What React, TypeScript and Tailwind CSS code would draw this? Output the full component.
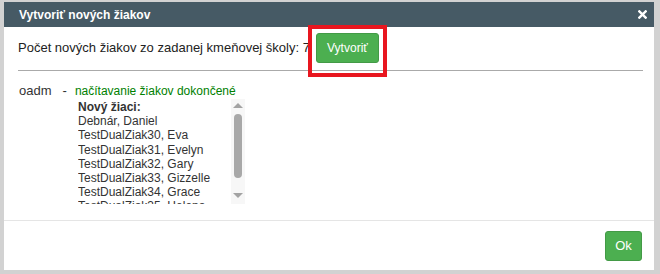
const students = [
  'Debnár, Daniel',
  'TestDualZiak30, Eva',
  'TestDualZiak31, Evelyn',
  'TestDualZiak32, Gary',
  'TestDualZiak33, Gizzelle',
  'TestDualZiak34, Grace',
  'TestDualZiak35, Helena',
];

function FakeScrollbar() {
  return (
    <div className="flex w-[14px] flex-col items-center bg-[#f7f7f7]">
      {/* up arrow */}
      <div className="mt-[4px] h-0 w-0 border-x-[5px] border-b-[5px] border-x-transparent border-b-[#a3a3a3]" />
      <div className="mt-[6px] h-[64px] w-[8px] rounded-full bg-[#a8a8a8]" />
      <div className="flex-1" />
      {/* down arrow */}
      <div className="mb-[6px] h-0 w-0 border-x-[5px] border-t-[5px] border-x-transparent border-t-[#a3a3a3]" />
    </div>
  );
}

export default function App() {
  return (
    <div
      className="h-[274px] w-[660px] overflow-hidden bg-[#d2d2d2] pl-[4px] pt-[2px]"
      style={{ fontFamily: '"Liberation Sans", Arial, sans-serif' }}
    >
      <div className="flex h-[268px] w-[650px] flex-col bg-white text-[12px] text-[#333]">
        {/* Header */}
        <div className="flex h-[25px] items-center justify-between bg-[#465a65] pl-[15px] pr-[7px] text-white">
          <span className="text-[12px] font-bold">Vytvoriť nových žiakov</span>
          <svg aria-hidden="true" className="h-[9px] w-[9px]" viewBox="0 0 10 10">
            <path d="M1.5 1.5l7 7M8.5 1.5l-7 7" stroke="white" strokeWidth={2.6} strokeLinecap="square" />
          </svg>
        </div>

        {/* Body */}
        <div className="flex-1 pl-[14px] pr-[11px]">
          <div className="flex items-center gap-[6px] pt-[6px]">
            <span className="text-[13px] text-[#222]">Počet nových žiakov zo zadanej kmeňovej školy: 7</span>
            <div className="relative">
              <button
                type="button"
                className="h-[30px] w-[63px] rounded-[3px] border border-[#439a46] bg-[#4caf50] text-[12px] text-white"
              >
                Vytvoriť
              </button>
              <div className="pointer-events-none absolute -left-[8px] -top-[8px] h-[52px] w-[79px] border-[4px] border-[#e8161f]" />
            </div>
          </div>
          <div className="mt-[7px] h-px bg-[#aaaaaa]" />

          <div className="pl-[1px] pt-[13px]">
            <div className="flex items-center leading-[14px]">
              <span className="text-[13px]">oadm</span>
              <span className="ml-[11px] text-[13px]">-</span>
              <span className="ml-[8px] text-[#008000]">načítavanie žiakov dokončené</span>
            </div>
            <div className="ml-[59px] mt-[1px] flex h-[105px] w-[167px]">
              <div className="flex-1 overflow-hidden pt-[1px] leading-[14.2px]">
                <div className="font-bold">Nový žiaci:</div>
                {students.map((s) => (
                  <div key={s}>{s}</div>
                ))}
              </div>
              <FakeScrollbar />
            </div>
          </div>
        </div>

        {/* Footer */}
        <div className="flex h-[50px] items-start justify-end border-t border-[#e5e5e5] pr-[12px] pt-[10px]">
          <button
            type="button"
            className="h-[30px] w-[37px] rounded-[3px] border border-[#439a46] bg-[#4caf50] text-[13px] text-white"
          >
            Ok
          </button>
        </div>
      </div>
    </div>
  );
}
